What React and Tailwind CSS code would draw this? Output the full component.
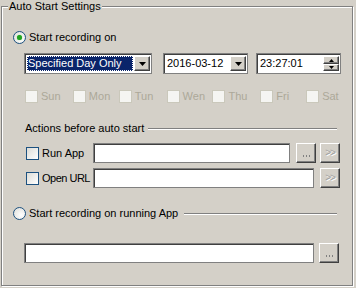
import React from "react";

const sunken = "bg-white border border-[#808080] shadow-[inset_1px_1px_0_#404040]";
const raised = "bg-[#d4d0c8] border border-t-white border-l-white border-r-[#404040] border-b-[#404040] shadow-[inset_-1px_-1px_0_#808080]";

function Radio({ checked }) {
    return (
        <span className="w-[13px] h-[13px] rounded-full border border-[#1c5180] bg-[radial-gradient(circle_at_65%_65%,#ffffff,#dcdcd7)] flex items-center justify-center shrink-0">
            {checked && <span className="w-[5px] h-[5px] rounded-full bg-[#21a121] shadow-[0_0_1px_#3fd23f]" />}
        </span>
    );
}

function Check({ disabled }) {
    return disabled ? (
        <span className="w-[13px] h-[13px] border border-[#cac8bb] bg-[#f5f5f2] shrink-0" />
    ) : (
        <span className="w-[13px] h-[13px] border border-[#1c5180] bg-[linear-gradient(135deg,#dcdcd7,#ffffff)] shrink-0" />
    );
}

function Arrow() {
    return (
        <svg width="7" height="4" viewBox="0 0 7 4">
            <path d="M0 0h7L3.5 4z" fill="#000" />
        </svg>
    );
}

function Btn({ children, className = "" }) {
    return (
        <div className={`${raised} w-[20px] h-[20px] flex items-center justify-center shrink-0 ${className}`}>
            {children}
        </div>
    );
}

function Dots() {
    return (
        <span className="flex gap-[2px] mt-[5px]">
            <span className="w-[1px] h-[2px] bg-[#808080]" />
            <span className="w-[1px] h-[2px] bg-[#808080]" />
            <span className="w-[1px] h-[2px] bg-[#808080]" />
        </span>
    );
}

function Gt() {
    return (
        <span className="text-[#a0a0a0] text-[10px] leading-none tracking-[-1px] [text-shadow:1px_1px_0_#fff]">&gt;&gt;</span>
    );
}

const days = [
    ["Sun", "w-[48px]"],
    ["Mon", "w-[46px]"],
    ["Tun", "w-[48px]"],
    ["Wen", "w-[46px]"],
    ["Thu", "w-[48px]"],
    ["Fri", "w-[46px]"],
    ["Sat", "w-[46px]"],
];

export default function App() {
    return (
        <div className="w-[356px] h-[288px] bg-[#d4d0c8] pt-[6px] pl-[1px] text-[11px] text-black overflow-hidden" style={{ fontFamily: '"Liberation Sans", Arial, sans-serif' }}>
            <div className="relative w-[352px] h-[280px] border border-[#808080] shadow-[inset_1px_1px_0_#fff,1px_1px_0_#fff] flex flex-col">
                <span className="absolute left-[6px] top-[-8px] px-[1px] bg-[#d4d0c8] leading-[14px]">Auto Start Settings</span>

                <div className="mt-[24px] ml-[11px] h-[13px] flex items-center gap-[3px]">
                    <Radio checked />
                    <span className="leading-[13px]">Start recording on</span>
                </div>

                <div className="mt-[9px] ml-[22px] h-[21px] flex items-start">
                    <div className={`${sunken} w-[128px] h-[21px] flex p-[2px] pr-[1px]`}>
                        <div className="flex-1 bg-[#0a246a] text-white px-[1px] leading-[15px] outline outline-1 outline-dotted outline-[#ffffff] -outline-offset-1 mr-[1px] whitespace-nowrap">
                            Specified Day Only
                        </div>
                        <div className={`${raised} w-[16px] h-[15px] flex items-center justify-center`}>
                            <Arrow />
                        </div>
                    </div>
                    <div className={`${sunken} ml-[11px] w-[85px] h-[21px] flex items-center pl-[3px] pr-[1px]`}>
                        <span className="flex-1">2016-03-12</span>
                        <div className={`${raised} w-[16px] h-[15px] flex items-center justify-center`}>
                            <Arrow />
                        </div>
                    </div>
                    <div className={`${sunken} ml-[8px] w-[85px] h-[21px] flex items-center pl-[3px] pr-[1px]`}>
                        <span className="flex-1">23:27:01</span>
                        <div className="flex flex-col w-[16px] h-[15px]">
                            <div className={`${raised} h-[8px] flex items-center justify-center`}>
                                <svg width="5" height="3" viewBox="0 0 5 3"><path d="M0 3h5L2.5 0z" fill="#000" /></svg>
                            </div>
                            <div className={`${raised} h-[7px] flex items-center justify-center`}>
                                <svg width="5" height="3" viewBox="0 0 5 3"><path d="M0 0h5L2.5 3z" fill="#000" /></svg>
                            </div>
                        </div>
                    </div>
                </div>

                <div className="mt-[16px] ml-[23px] h-[13px] flex">
                    {days.map(([d, w]) => (
                        <div key={d} className={`${w} flex items-center gap-[3px]`}>
                            <Check disabled />
                            <span className="text-[#aca899] leading-[13px]">{d}</span>
                        </div>
                    ))}
                </div>

                <div className="mt-[19px] ml-[23px] mr-[15px] h-[13px] flex items-center gap-[4px]">
                    <span className="leading-[13px] whitespace-nowrap">Actions before auto start</span>
                    <div className="flex-1 h-[2px] border-t border-[#808080] border-b border-b-white mt-[1px]" />
                </div>

                <div className="mt-[8px] ml-[24px] h-[20px] flex items-center">
                    <Check />
                    <span className="ml-[3px] w-[51px] shrink-0 whitespace-nowrap">Run App</span>
                    <div className={`${sunken} w-[197px] h-[20px] shrink-0`} />
                    <Btn className="ml-[6px]"><Dots /></Btn>
                    <Btn className="ml-[4px]"><Gt /></Btn>
                </div>

                <div className="mt-[5px] ml-[24px] h-[20px] flex items-center">
                    <Check />
                    <span className="ml-[3px] w-[51px] shrink-0 whitespace-nowrap tracking-[-0.5px]">Open URL</span>
                    <div className={`${sunken} w-[221px] h-[20px] shrink-0`} />
                    <Btn className="ml-[6px]"><Gt /></Btn>
                </div>

                <div className="mt-[19px] ml-[11px] mr-[15px] h-[13px] flex items-center gap-[3px]">
                    <Radio />
                    <span className="leading-[13px] whitespace-nowrap">Start recording on running App</span>
                    <div className="flex-1 ml-[3px] h-[2px] border-t border-[#808080] border-b border-b-white" />
                </div>

                <div className="mt-[23px] ml-[22px] h-[20px] flex items-center">
                    <div className={`${sunken} w-[290px] h-[20px] shrink-0`} />
                    <Btn className="ml-[5px]"><Dots /></Btn>
                </div>
            </div>
        </div>
    );
}
